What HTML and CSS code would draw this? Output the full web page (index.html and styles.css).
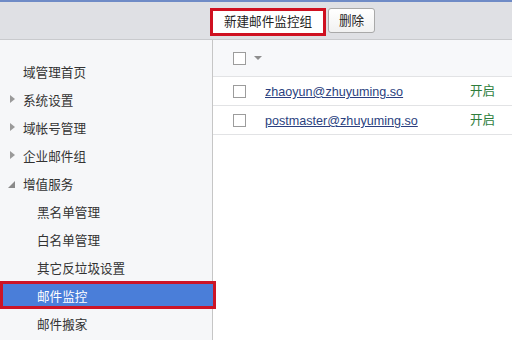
FILE: index.html
```html
<!DOCTYPE html>
<html lang="zh-CN">
<head>
  <meta charset="utf-8">
  <title>邮件监控</title>
  <link rel="stylesheet" href="styles.css">
</head>
<body>

  <div class="topLine"></div>
  <div class="toolbar">
    <button class="btn btnMarked">新建邮件监控组</button>
    <button class="btn">删除</button>
  </div>

  <div class="mainDiv">
    <ul class="sideMenu">
      <li class="menuItem">域管理首页</li>
      <li class="menuItem"><span class="arrow arrowRight"></span>系统设置</li>
      <li class="menuItem"><span class="arrow arrowRight"></span>域帐号管理</li>
      <li class="menuItem"><span class="arrow arrowRight"></span>企业邮件组</li>
      <li class="menuItem"><span class="arrow arrowOpen"></span>增值服务</li>
      <li class="menuItem subItem">黑名单管理</li>
      <li class="menuItem subItem">白名单管理</li>
      <li class="menuItem subItem">其它反垃圾设置</li>
      <li class="menuItem subItem active">邮件监控</li>
      <li class="menuItem subItem">邮件搬家</li>
    </ul>

    <div class="contentDiv">
      <div class="listHead">
        <span class="checkBox"></span>
        <span class="dropArrow"></span>
      </div>
      <div class="listRow">
        <span class="checkBox"></span>
        <a class="mailLink" href="#">zhaoyun@zhuyuming.so</a>
        <span class="status">开启</span>
      </div>
      <div class="listRow">
        <span class="checkBox"></span>
        <a class="mailLink" href="#">postmaster@zhuyuming.so</a>
        <span class="status">开启</span>
      </div>
    </div>
  </div>

</body>
</html>
```

FILE: styles.css
```css
body {
  margin: 0;
  width: 512px;
  height: 341px;
  overflow: hidden;
  background-color: #ffffff;
  color: #333333;
  font-family: "Liberation Sans", "Noto Sans CJK SC", sans-serif;
  font-size: 12.6px;
}

.topLine {
  height: 2px;
  background-color: #6f8bc6;
}

.toolbar {
  display: flex;
  align-items: flex-start;
  gap: 2px;
  height: 38px;
  padding-left: 210px;
  background-color: #dfe0e4;
  border-bottom: 1px solid #c9cacd;
  box-sizing: border-box;
  padding-top: 6px;
}

.btn {
  height: 25px;
  padding: 0 10px;
  background: linear-gradient(#ffffff, #f1f1f1);
  border: 1px solid #a9a9a9;
  border-radius: 3px;
  color: #222222;
  font-family: "Liberation Sans", "Noto Sans CJK SC", sans-serif;
  font-size: 12.6px;
  line-height: 22px;
}

.btnMarked {
  height: 28px;
  width: 116px;
  padding: 0;
  border: 3px solid #cf1020;
  border-radius: 0;
  background: #ffffff;
}

.mainDiv {
  display: flex;
  height: 300px;
}

.sideMenu {
  list-style: none;
  margin: 0;
  padding: 17px 0 0 0;
  width: 212px;
  flex-shrink: 0;
  background-color: #f6f7f9;
  border-right: 1px solid #c6c6c6;
}

.menuItem {
  display: flex;
  align-items: center;
  height: 28px;
  padding-left: 23px;
  box-sizing: border-box;
}

.subItem {
  padding-left: 37px;
}

.arrow {
  width: 0;
  height: 0;
  margin-left: -13px;
  margin-right: 8px;
}

.arrowRight {
  border-top: 4px solid transparent;
  border-bottom: 4px solid transparent;
  border-left: 5px solid #9a9a9a;
}

.arrowOpen {
  margin-left: -15px;
  margin-right: 8px;
  margin-top: 2px;
  border-left: 7px solid transparent;
  border-bottom: 7px solid #8a8a8a;
}

.active {
  position: relative;
  width: 216px;
  padding-left: 34px;
  background-color: #4a7ed9;
  border: 3px solid #cc1526;
  color: #ffffff;
}

.contentDiv {
  flex: 1;
}

.listHead {
  display: flex;
  align-items: center;
  height: 37px;
  padding-left: 20px;
  background-color: #f7f8fa;
  border-bottom: 1px solid #e2e3e5;
  box-sizing: border-box;
}

.listRow {
  display: flex;
  align-items: center;
  height: 29px;
  padding-left: 20px;
  border-bottom: 1px solid #e2e3e5;
  box-sizing: border-box;
  line-height: 16px;
}

.checkBox {
  width: 13px;
  height: 13px;
  border: 1px solid #9c9c9c;
  background-color: #ffffff;
  box-sizing: border-box;
}

.dropArrow {
  width: 0;
  height: 0;
  margin-left: 8px;
  border-left: 4px solid transparent;
  border-right: 4px solid transparent;
  border-top: 4px solid #8e8e8e;
}

.mailLink {
  margin-left: 19px;
  margin-top: 2px;
  width: 205px;
  color: #2b3f80;
}

.status {
  color: #2e7d3c;
}
```
